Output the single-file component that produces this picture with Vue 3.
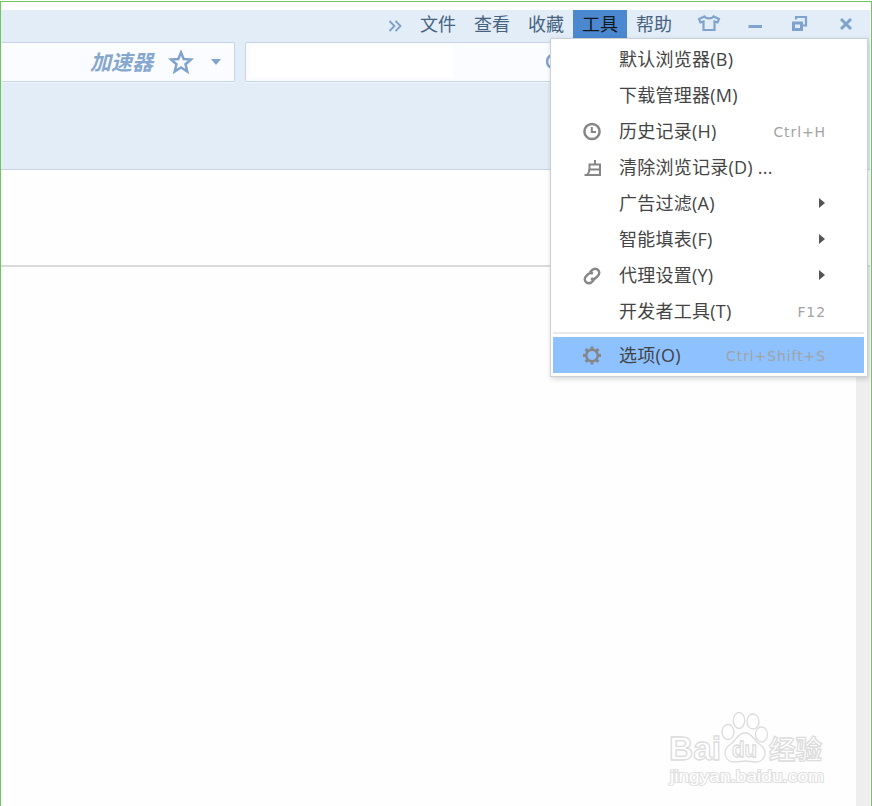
<template>
  <div class="window">
    <header class="chrome">
      <nav class="menubar">
        <svg class="more" width="15" height="12" viewBox="0 0 15 12">
          <path d="M1.5 1 6.5 6l-5 5M7.5 1l5 5-5 5" />
        </svg>
        <span
          v-for="tab in tabs"
          :key="tab"
          class="tab"
          :class="{ active: tab === activeTab }"
        >{{ tab }}</span>
        <svg class="controls" width="156" height="28" viewBox="0 0 156 28">
          <path d="M7.500 6.500 2 9l1.500 3.500 3-1V20h11v-8.500l3 1L22 9l-5.500-2.500c-1.500 2.500-7.500 2.500-9 0Z" />
          <path class="thick" d="M51.500 16.500h13.500" />
          <path d="M99 9.500V7h10v8.500h-3" />
          <path class="thick" d="M96.500 13h8v6.500h-8z" />
          <path class="thick" d="m144 9 10 10M154 9l-10 10" />
        </svg>
      </nav>
      <div class="toolbar">
        <div class="address">
          <span class="speed">加速器</span>
          <svg class="star" width="26" height="26" viewBox="0 0 26 26">
            <path d="m13 3.500 2.700 6.500 7.300.5-5.500 4.700 1.800 7.300-6.300-4-6.300 4 1.800-7.300L3 10.500l7.300-.5z" />
          </svg>
          <i class="caret"></i>
        </div>
        <div class="search">
          <div class="search-input"></div>
          <svg class="glass" width="18" height="20" viewBox="0 0 18 20">
            <circle cx="8" cy="9.500" r="7" />
            <path d="m13 14 4 5" />
          </svg>
        </div>
      </div>
    </header>

    <div class="banner"></div>
    <main class="page">
      <div class="scrollbar"></div>
    </main>

    <div class="menu">
      <template v-for="item in items" :key="item.label">
        <div v-if="item.divider" class="divider"></div>
        <div class="item" :class="{ selected: item.selected }">
          <span class="icon">
            <svg v-if="item.icon === 'clock'" width="20" height="20" viewBox="0 0 20 20">
              <circle class="ring" cx="10" cy="10.500" r="7.600" />
              <path d="M9.800 6v5h4.200" />
            </svg>
            <svg v-else-if="item.icon === 'brush'" width="20" height="20" viewBox="0 0 20 20">
              <path d="M13 3v4M7.500 11V7.500H18V18H5c1.500-1.500 2.500-4 2.500-7ZM7.500 12.500H18M2.500 18H8" />
            </svg>
            <svg v-else-if="item.icon === 'link'" width="20" height="20" viewBox="0 0 20 20">
              <g class="chain" transform="rotate(-45 10 11)">
                <path d="M9 15H5.500a4 4 0 0 1 0-8h3a4 4 0 0 1 3.800 3M11 7h3.500a4 4 0 0 1 0 8h-3a4 4 0 0 1-3.800-3" />
              </g>
            </svg>
            <svg v-else-if="item.icon === 'gear'" width="20" height="20" viewBox="0 0 20 20">
              <circle class="ring" cx="10" cy="10.500" r="5.800" />
              <path
                v-for="n in 8"
                :key="n"
                class="tooth"
                d="M10 1.500v3"
                :transform="`rotate(${n * 45} 10 10.5)`"
              />
            </svg>
          </span>
          <span class="label">{{ item.label }}</span>
          <span v-if="item.shortcut" class="shortcut">{{ item.shortcut }}</span>
          <i v-if="item.submenu" class="arrow"></i>
        </div>
      </template>
    </div>

    <svg class="watermark" width="164" height="82" viewBox="0 0 164 82">
      <text class="brand" x="5" y="52" font-size="34" textLength="52" lengthAdjust="spacingAndGlyphs">Bai</text>
      <ellipse cx="64" cy="24" rx="6" ry="7.500" />
      <ellipse cx="75" cy="12.500" rx="5.700" ry="8" />
      <ellipse cx="89" cy="13.500" rx="6" ry="7.500" />
      <ellipse cx="97.500" cy="26.500" rx="6" ry="7.500" />
      <path d="M81 25c7 0 8 6 13 10 6 4 9 8 6 14-4 8-12 4-19 4s-15 4-19-4c-3-6 0-10 6-14 5-4 6-10 13-10Z" />
      <text class="brand" x="68" y="49" font-size="22" textLength="25" lengthAdjust="spacingAndGlyphs">du</text>
      <text class="brand" x="105" y="50.500" font-size="26.500" textLength="53">经验</text>
      <text class="site" x="6" y="73.500" font-size="16.500" textLength="154" lengthAdjust="spacingAndGlyphs">jingyan.baidu.com</text>
    </svg>
  </div>
</template>

<script setup>
const tabs = ['文件', '查看', '收藏', '工具', '帮助'];
const activeTab = '工具';

const items = [
  { label: '默认浏览器(B)' },
  { label: '下载管理器(M)' },
  { label: '历史记录(H)', icon: 'clock', shortcut: 'Ctrl+H' },
  { label: '清除浏览记录(D) ...', icon: 'brush' },
  { label: '广告过滤(A)', submenu: true },
  { label: '智能填表(F)', submenu: true },
  { label: '代理设置(Y)', icon: 'link', submenu: true },
  { label: '开发者工具(T)', shortcut: 'F12' },
  { label: '选项(O)', icon: 'gear', shortcut: 'Ctrl+Shift+S', divider: true, selected: true }
];
</script>

<style>
body {
  background: #fff;
}
</style>

<style scoped>
* {
  box-sizing: border-box;
}

.window {
  position: relative;
  display: flex;
  flex-direction: column;
  width: 872px;
  height: 805px;
  margin-top: 1px;
  padding: 8px 1px 0 0;
  overflow: hidden;
  border: 1px solid #6dc75d;
  border-bottom: 0;
  background: #fff;
  font-family: "Open Sans", "Noto Sans CJK SC", sans-serif;
  font-size: 18px;
}

svg {
  display: block;
  flex: none;
  fill: none;
}

.chrome {
  height: 160px;
  flex: none;
  border-bottom: 1px solid #c6d5e6;
  background: #e2edf8;
}

.menubar {
  display: flex;
  height: 28px;
  padding-left: 387px;
  color: #46627f;
}

.more {
  margin: 10px 8px 0 0;
  stroke: #7d9fc4;
  stroke-width: 1.8;
}

.tab {
  width: 54px;
  flex: none;
  line-height: 29px;
  text-align: center;
}

.tab.active {
  background: #4c88d0;
  color: #101820;
}

.controls {
  margin-left: 16px;
  stroke: #7fa3cc;
  stroke-width: 2.2;
}

.thick {
  stroke-width: 3;
}

.toolbar {
  display: flex;
  gap: 10px;
  padding-top: 4px;
}

.address,
.search {
  display: flex;
  align-items: center;
  height: 40px;
  border: 1px solid #c5d5e7;
  border-radius: 2px;
  background: #fbfcff;
  box-shadow: 0 1px 0 #f0f6fc;
}

.address {
  width: 234px;
  justify-content: flex-end;
  padding-right: 13px;
  border-left: 0;
}

.speed {
  margin-right: 15px;
  color: #86a8ce;
  font-size: 21px;
  font-style: italic;
  font-weight: bold;
  line-height: 38px;
}

.star {
  margin-right: 17px;
  stroke: #7fa3cc;
  stroke-width: 2.5;
}

.caret {
  border: 5px solid transparent;
  border-top: 6px solid #7fa3cc;
  border-bottom: 0;
}

.search {
  width: 620px;
}

.search-input {
  width: 202px;
  height: 32px;
  margin: 0 93px 0 5px;
  background: #fff;
}

.glass {
  stroke: #7fa3cc;
  stroke-width: 2.5;
}

.banner {
  height: 97px;
  flex: none;
  border-bottom: 2px solid #dadada;
  background: #fefefe;
}

.page {
  display: flex;
  flex: 1;
  justify-content: flex-end;
  background: #fefefe;
}

.scrollbar {
  width: 14px;
  background: #eee;
}

.menu {
  position: absolute;
  top: 36px;
  left: 549px;
  width: 318px;
  height: 339px;
  padding: 2px 3px 3px 2px;
  border: 1px solid #cbd0d8;
  background: #fff;
  box-shadow: 1px 2px 5px rgba(0, 0, 0, 0.16);
}

.item {
  display: flex;
  align-items: center;
  height: 36px;
  padding-right: 39px;
  color: #444;
}

.item.selected {
  background: #8dc1ff;
}

.divider {
  height: 2px;
  margin: 3px 0;
  background: #eaeaea;
}

.icon {
  width: 37px;
  margin-left: 29px;
  stroke: #868686;
  stroke-width: 2;
}

.ring,
.chain {
  stroke-width: 2.5;
}

.tooth {
  stroke-width: 3;
}

.label {
  flex: 1;
  letter-spacing: 0.25px;
  line-height: 36px;
  white-space: nowrap;
}

.shortcut {
  margin-right: -1px;
  padding-top: 2px;
  color: #a3a3a3;
  font-family: "DejaVu Sans", sans-serif;
  font-size: 14px;
  letter-spacing: 0.9px;
}

.arrow {
  border: 5px solid transparent;
  border-left: 6px solid #555;
  border-right: 0;
}

.watermark {
  position: absolute;
  top: 706px;
  left: 663px;
  fill: #fff;
  stroke: #dcdcdc;
  stroke-width: 1.3;
}

.brand {
  font-family: "Liberation Sans", "Noto Sans CJK SC", sans-serif;
  font-weight: bold;
}

.site {
  font-family: "Liberation Sans", sans-serif;
  paint-order: stroke;
  stroke: #e0e0e0;
  stroke-width: 2;
}
</style>
